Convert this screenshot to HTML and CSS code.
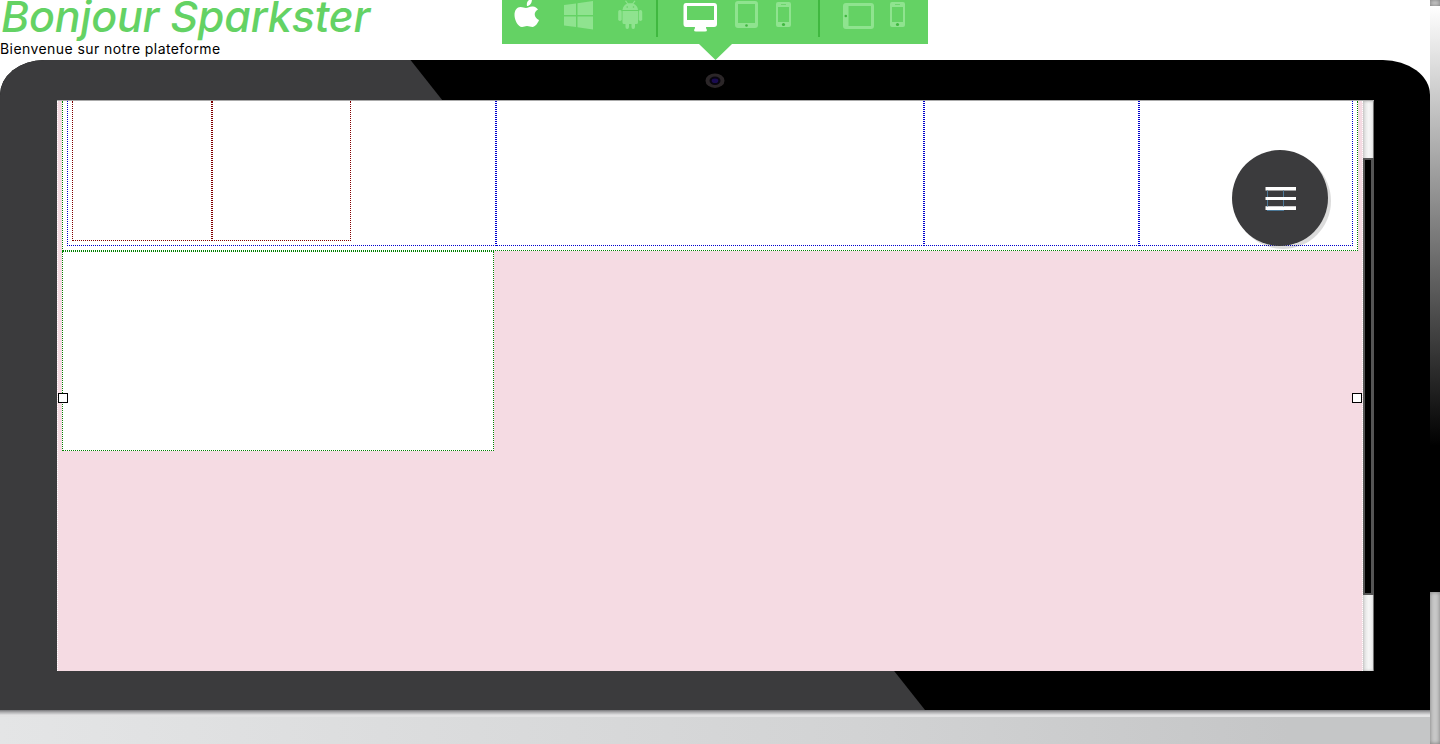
FILE: index.html
```html
<!DOCTYPE html>
<html lang="fr">
<head>
<meta charset="utf-8">
<title>Sparkster</title>
<link rel="stylesheet" href="styles.css">
</head>
<body>
<main class="page">
  <header class="header">
    <div class="welcome">
      <h1 class="title">Bonjour Sparkster</h1>
      <p class="subtitle">Bienvenue sur notre plateforme</p>
    </div>
    <nav class="devices">
      <svg class="devices-icons" width="426" height="60" viewBox="502 0 426 60">
        <path fill="#64d264" d="M502 0H928V44H732L715.500 60L699 44H502Z"/>
        <path fill="#fff" d="M527 6C526 2 529-1 532-1C532 3 530 6 527 6ZM526 8C528 8 530 6 533 6.500C535 6.500 537 8 538 9.500C533 12 534 18 539 20C538 23 535 27 532.500 27C530.500 27 529 26 527 26C525 26 524 27 522 27C518 27 514.500 20 514.500 15C514.500 10 517 7 520.500 7C523 7 524 8 526 8Z"/>
        <g fill="#8fe38f">
          <path d="M564 5L576 3.500V15H564ZM577.500 3.200L593 1V15H577.500ZM564 16.500H576V27L564 25.500ZM577.500 16.500H593V29.500L577.500 27.200Z"/>
          <path d="M622.500 10C623 6.500 625 4.500 627 3.800L625 1L626 .6L628 3.200H632.500L634.500 .6L635.500 1L633.500 3.800C636 5 638 7 638 10ZM622.500 11H638V22.500Q638 24 636.500 24H635V27Q635 29 633.200 29T631.500 27V24H629V27Q629 29 627.200 29T625.500 27V24H624Q622.500 24 622.500 22.500Z"/>
          <rect x="618.200" y="10" width="3.500" height="11" rx="1.700"/><rect x="638.700" y="10" width="3.500" height="11" rx="1.700"/>
        </g>
        <g fill="#64d264"><circle cx="627.200" cy="7" r=".8"/><circle cx="633.500" cy="7" r=".8"/></g>
        <path stroke="#40b840" stroke-width="2" d="M657 0V37M819 0V37"/>
        <path fill="#fff" fill-rule="evenodd" d="M686 3H714Q717 3 717 6V24Q717 27 714 27H706Q706 29 707 30Q707 31.500 705 31.500H696Q694 31.500 694 30Q695 29 695 27H686Q683.500 27 683.500 24V6Q683.500 3 686 3ZM687 6V20H714V6Z"/>
        <g fill="#8fe38f" fill-rule="evenodd">
          <path d="M738 1H755Q758 1 758 4V25Q758 28 755 28H738Q735 28 735 25V4Q735 1 738 1ZM738 4V23H755V4Z"/>
          <path d="M778 2H789Q791 2 791 4V25Q791 27 789 27H778Q776 27 776 25V4Q776 2 778 2ZM778 7V22H789V7Z"/>
          <path d="M846 3H871Q874 3 874 6V26Q874 29 871 29H846Q843 29 843 26V6Q843 3 846 3ZM848.500 6V26H871V6Z"/>
          <path d="M892 2H903Q905 2 905 4V25Q905 27 903 27H892Q890 27 890 25V4Q890 2 892 2ZM892 7V22H903V7Z"/>
        </g>
        <g fill="#40b840"><circle cx="746.500" cy="25.500" r="1.300"/><circle cx="783.500" cy="24.500" r="1.600"/><circle cx="845.800" cy="16" r="1.300"/><circle cx="897.500" cy="24.500" r="1.600"/></g>
        <path stroke="#64d264" stroke-width=".8" d="M781 4.500H786M895 4.500H900"/>
      </svg>
    </nav>
  </header>

  <section class="laptop">
    <svg class="camera" width="20" height="16" viewBox="0 0 20 16">
      <ellipse cx="10" cy="7.700" rx="9.500" ry="7.300" fill="#2b2628"/>
      <ellipse cx="10" cy="7.700" rx="5.500" ry="4.200" fill="#08050f"/>
      <ellipse cx="10" cy="7.700" rx="3.300" ry="2.300" fill="#190b50"/>
    </svg>
    <div class="screen">
      <div class="canvas">
        <div class="row">
          <div class="cell cell-split">
            <div class="sub sub-a"></div>
            <div class="sub sub-b"></div>
          </div>
          <div class="cell cell-wide"></div>
          <div class="cell cell-third"></div>
          <div class="cell cell-fourth"></div>
        </div>
        <div class="block"></div>
      </div>
      <div class="scroll"><div class="scroll-thumb"></div></div>
      <i class="handle handle-left"></i>
      <i class="handle handle-right"></i>
      <button class="menu" aria-label="Menu">
        <svg width="32" height="26" viewBox="0 0 32 26">
          <path fill="#fff" d="M.5 1H31V4.500H.5ZM.5 11H31V14H.5ZM.5 20.300H31V24H.5Z"/>
          <path fill="none" stroke="#4b7898" d="M2.500 4.500V11M2.500 14V20.500M18.500 4.500V11M18.500 14V20.500M2 24.500H19"/>
        </svg>
      </button>
    </div>
  </section>
  <div class="base"></div>
</main>
<aside class="page-scroll">
  <div class="track-top"></div>
  <div class="page-thumb"></div>
  <div class="track-bottom"></div>
</aside>
</body>
</html>
```
FILE: styles.css
```css
* { box-sizing: border-box; }

body {
  margin: 0;
  height: 744px;
  overflow: hidden;
  display: flex;
  background: #fff;
  font-family: Inter, "Open Sans", sans-serif;
}

.page {
  width: 1430px;
  display: flex;
  flex-direction: column;
}

.header {
  height: 60px;
  display: flex;
}

.welcome {
  width: 502px;
  white-space: nowrap;
}

.title {
  margin: 0 0 0 1px;
  height: 40px;
  color: #64d264;
  font-size: 43px;
  line-height: 32px;
  font-weight: 500;
  font-style: italic;
  letter-spacing: -0.2px;
}

.subtitle {
  margin: 0;
  color: #000;
  font-size: 14px;
  line-height: 17px;
  letter-spacing: 0.42px;
}

.devices-icons { display: block; }

/* Laptop lid with its diagonal reflection */
.laptop {
  position: relative;
  height: 650px;
  padding: 40px 56px 39px 57px;
  border-radius: 44px 47px 0 0 / 35px 35px 0 0;
  background: #000;
  overflow: hidden;
}

.laptop::before {
  content: "";
  position: absolute;
  inset: 0;
  background: #3b3b3d;
  clip-path: polygon(0 0, 410.5px 0, 925px 650px, 0 650px);
}

.camera {
  position: absolute;
  left: 705px;
  top: 13px;
}

.screen {
  position: relative;
  height: 571px;
  display: flex;
  background: #f5dbe3;
  border-top: 1px solid #aaa;
}

.canvas {
  width: 1306px;
  padding: 0 4px;
  border-left: 1px dotted #fff;
  border-right: 1px dotted #fff;
}

.row {
  width: 1296px;
  height: 150px;
  display: flex;
  padding: 0 4px 4px;
  background: #fff;
  border: 1px dotted #008000;
  border-top: 0;
}

.cell {
  border: 1px dotted #0000cd;
  border-top: 0;
}

.cell-split {
  width: 429px;
  padding: 0 4px 4px;
  display: flex;
}

.cell-wide { width: 428px; }
.cell-third { width: 215px; }
.cell-fourth { width: 214px; }

.sub {
  border: 1px dotted #800000;
  border-top: 0;
}

.sub-a { width: 140px; }
.sub-b { width: 139px; }

.block {
  width: 432px;
  height: 200px;
  background: #fff;
  border: 1px dotted #008000;
}

.scroll {
  width: 11px;
  padding-top: 57px;
  background: linear-gradient(90deg, #dedede, #f5f5f5 50%, #eee 90%, #555 90%);
  box-shadow: inset 0 0 3px #aaa;
}

.scroll-thumb {
  height: 437px;
  background: #000;
  border: 2px solid #555;
  border-right-width: 3px;
}

.handle {
  position: absolute;
  top: 292px;
  width: 10px;
  height: 10px;
  background: #fff;
  border: 1px solid #000;
}

.handle-left { left: 1px; }
.handle-right { left: 1295px; }

.menu {
  position: absolute;
  left: 1175px;
  top: 49px;
  width: 96px;
  height: 96px;
  display: grid;
  place-items: center;
  padding: 2px 0 0 1px;
  border: 0;
  border-radius: 50%;
  background: #3b3b3d;
  box-shadow: 3px 3px 0 rgba(0, 0, 0, 0.14);
}

.base {
  height: 34px;
  background:
    linear-gradient(#77777a 0, #aaaaac 2px, #ceced0 4px, #e3e3e4 5px, #e3e3e4 7px, transparent 7px),
    linear-gradient(90deg, #e4e5e6, #d2d3d4 60%, #c5c6c7 90%);
}

.page-scroll {
  width: 10px;
  display: flex;
  flex-direction: column;
}

.track-top,
.track-bottom {
  background: #c9c9c9;
  box-shadow: inset 0 0 4px #777;
}

.track-top { height: 6px; }

.page-thumb {
  height: 586px;
  background: linear-gradient(#fff, #000 440px);
}

.track-bottom { flex: 1; }
```
